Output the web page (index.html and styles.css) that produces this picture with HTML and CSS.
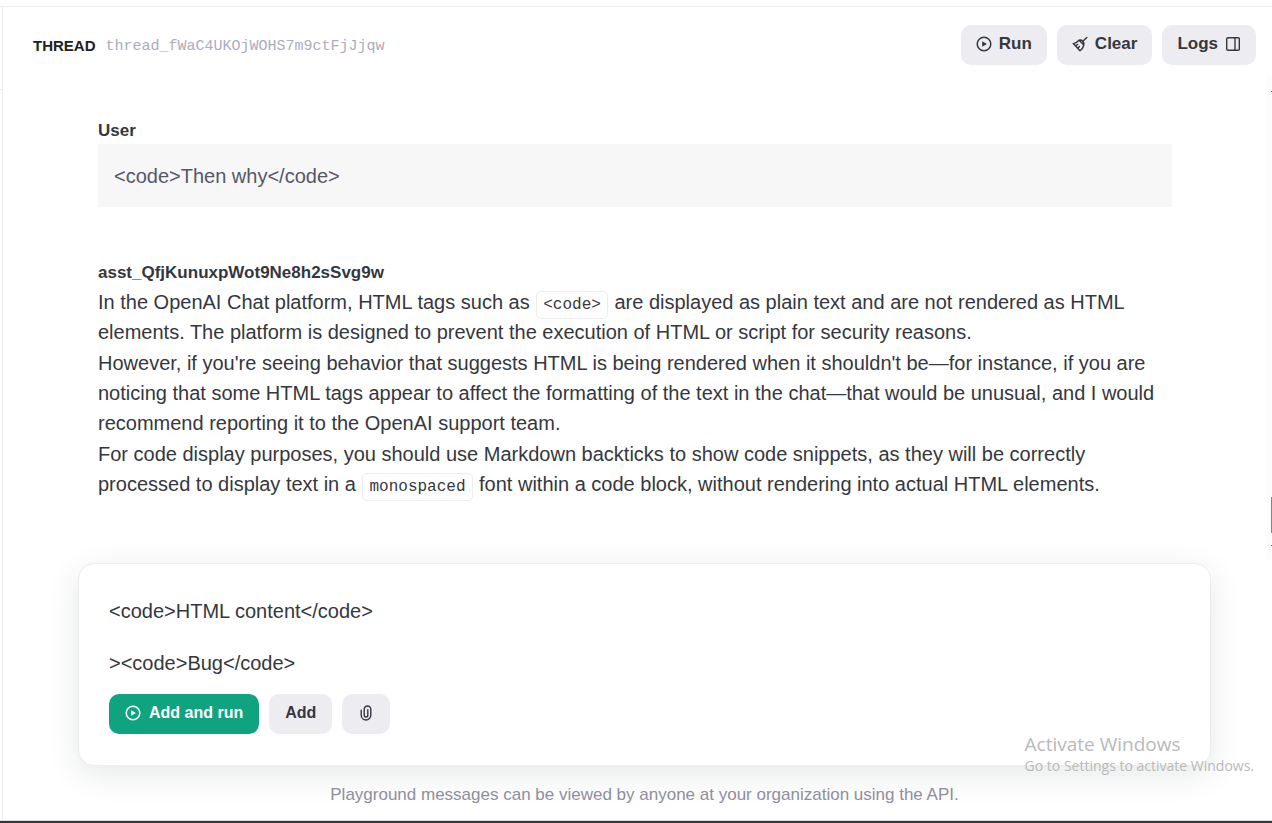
FILE: index.html
```html
<!DOCTYPE html>
<html lang="en">
<head>
<meta charset="utf-8">
<meta name="viewport" content="width=device-width, initial-scale=1">
<title>Playground</title>
<link rel="stylesheet" href="styles.css">
</head>
<body>
<div class="app">
  <aside class="rail"><div class="rail-head"></div></aside>
  <main class="main">
    <header class="header">
      <h1 class="title">THREAD</h1>
      <span class="thread-id">thread_fWaC4UKOjWOHS7m9ctFjJjqw</span>
      <div class="actions">
        <button class="btn" type="button">
          <svg class="icon" viewBox="0 0 16 16" fill="none" stroke="currentColor" stroke-width="1.5"><circle cx="8" cy="8" r="6.8"/><path d="M6.2 5.2v5.6L10.9 8z" fill="currentColor" stroke="none"/></svg>
          Run
        </button>
        <button class="btn" type="button">
          <svg class="icon" viewBox="0 0 16 16" fill="none" stroke="currentColor" stroke-width="1.4" stroke-linecap="round" stroke-linejoin="round"><path d="M14.8 1.4 10.6 5.6M7 4.2 11.8 9M7 4.2Q4.8 6.8 1.2 7.6L8 14.8Q11.2 12.2 11.8 9M7 4.2Q9.2 3.6 10.8 5.2T11.8 9M3.4 9.8 5.6 8.4M6 12.4 7.4 10.4"/></svg>
          Clear
        </button>
        <button class="btn" type="button">
          Logs
          <svg class="icon" viewBox="0 0 16 16" fill="none" stroke="currentColor" stroke-width="1.4"><rect x="1.7" y="1.7" width="12.6" height="12.6" rx="1.2"/><path d="M10 1.7v12.6"/></svg>
        </button>
      </div>
    </header>

    <div class="scroller">
      <section class="messages">
        <article class="message">
          <h2 class="author">User</h2>
          <p class="user-text">&lt;code&gt;Then why&lt;/code&gt;</p>
        </article>
        <article class="message">
          <h2 class="author">asst_QfjKunuxpWot9Ne8h2sSvg9w</h2>
          <p class="reply">In the OpenAI Chat platform, HTML tags such as <code class="code">&lt;code&gt;</code> are displayed as plain text and are not rendered as HTML<br>elements. The platform is designed to prevent the execution of HTML or script for security reasons.</p>
          <p class="reply">However, if you're seeing behavior that suggests HTML is being rendered when it shouldn't be—for instance, if you are<br>noticing that some HTML tags appear to affect the formatting of the text in the chat—that would be unusual, and I would<br>recommend reporting it to the OpenAI support team.</p>
          <p class="reply">For code display purposes, you should use Markdown backticks to show code snippets, as they will be correctly<br>processed to display text in a <code class="code">monospaced</code> font within a code block, without rendering into actual HTML elements.</p>
        </article>
      </section>
      <div class="scrollbar"><span class="mark"></span><span class="thumb"></span><span class="mark"></span></div>
    </div>

    <form class="composer">
      <textarea class="input" rows="3" aria-label="Message">&lt;code&gt;HTML content&lt;/code&gt;

&gt;&lt;code&gt;Bug&lt;/code&gt;</textarea>
      <div class="buttons">
        <button class="btn primary" type="button">
          <svg class="icon" viewBox="0 0 16 16" fill="none" stroke="currentColor" stroke-width="1.5"><circle cx="8" cy="8" r="6.8"/><path d="M6.2 5.2v5.6L10.9 8z" fill="currentColor" stroke="none"/></svg>
          Add and run
        </button>
        <button class="btn" type="button">Add</button>
        <button class="btn" type="button" aria-label="Attach file">
          <svg class="icon" viewBox="0 0 16 16" fill="none" stroke="currentColor" stroke-width="1.4" stroke-linecap="round"><path d="M3.2 5.2v5a4.8 4.8 0 0 0 9.6 0V4.3a3.3 3.3 0 0 0-6.6 0v5.9a1.8 1.8 0 0 0 3.6 0V4.8"/></svg>
        </button>
      </div>
    </form>
    <p class="note">Playground messages can be viewed by anyone at your organization using the API.</p>
  </main>
</div>
<div class="watermark">
  <p class="watermark-title">Activate Windows</p>
  <p class="watermark-text">Go to Settings to activate Windows.</p>
</div>
</body>
</html>
```
FILE: styles.css
```css
* { box-sizing: border-box; }
body {
  margin: 0;
  min-height: 100vh;
  display: flex;
  flex-direction: column;
  padding-top: 6px;
  background: #fff;
  border-bottom: 2px solid #353539;
  color: #353740;
  font-family: "Liberation Sans", Arial, sans-serif;
  overflow: hidden;
}
h1, h2, p { margin: 0; }
.app {
  flex: 1;
  display: flex;
  border-top: 1px solid #ececf1;
  border-bottom: 1px solid #dcdcde;
}
.rail { width: 3px; border-right: 1px solid #ececf1; }
.rail-head { height: 83px; border-bottom: 1px solid #ececf1; }
.main { flex: 1; display: flex; flex-direction: column; min-width: 0; }
.header {
  display: flex;
  align-items: center;
  padding: 18px 16px 10px 30px;
}
.title { padding-top: 2px; font-size: 15px; font-weight: 700; line-height: 24px; color: #202123; }
.thread-id {
  padding-top: 2px;
  margin-left: 10px;
  font-family: "Liberation Mono", monospace;
  font-size: 15px;
  color: #acacbe;
}
.actions { margin-left: auto; display: flex; gap: 10px; }
.btn {
  display: flex;
  align-items: center;
  gap: 8px;
  height: 40px;
  padding: 0 15px 2px;
  border: 0;
  border-radius: 10px;
  background: #ececf1;
  color: #353740;
  font: 700 17px/24px "Liberation Sans", Arial, sans-serif;
}
.actions .btn { gap: 7px; }
.buttons .btn { padding: 0 16px 2px; font-size: 16px; }
.primary { background: #10a37f; color: #fff; }
.icon { width: 16px; height: 16px; }
.scroller { flex: 1; display: flex; }
.messages {
  flex: 1;
  display: flex;
  flex-direction: column;
  gap: 52px;
  padding: 42px 95px 0;
}
.author { padding-top: 1px; font-size: 17px; line-height: 26px; }
.user-text {
  padding: 17px 16px 16px;
  background: #f7f7f8;
  color: #565869;
  font-size: 20px;
  line-height: 30px;
}
.reply { margin-top: 1px; font-size: 20px; line-height: 30px; white-space: nowrap; }
.code {
  margin: 0 1px;
  padding: 4px 6px;
  border: 1px solid #ececf1;
  border-radius: 5px;
  font-family: "Liberation Mono", monospace;
  font-size: 16px;
  line-height: 20px;
}
.scrollbar {
  width: 5px;
  height: 485px;
  display: flex;
  flex-direction: column;
  align-items: flex-end;
  padding: 16px 0 14px;
  background: #fcfcfc;
}
.mark { width: 1px; height: 1px; background: #606060; }
.thumb { width: 1px; height: 36px; margin: auto 0 12px; background: #858585; }
.composer {
  margin: 0 61px 0 75px;
  padding: 34px 30px 31px;
  border: 1px solid #ececf1;
  border-radius: 16px;
  background: #fff;
  box-shadow: 0 8px 32px rgba(20, 50, 40, 0.11);
}
.input {
  display: block;
  width: 100%;
  padding: 0;
  border: 0;
  outline: 0;
  resize: none;
  background: transparent;
  color: #353740;
  font: 20px/26px "Liberation Sans", Arial, sans-serif;
  overflow: hidden;
}
.buttons { display: flex; gap: 10px; margin-top: 18px; }
.note {
  padding: 17px 0 13px 14px;
  text-align: center;
  font-size: 17px;
  line-height: 24px;
  color: #8e8ea0;
}
.watermark {
  position: absolute;
  right: 18px;
  bottom: 47px;
  color: #b9b9b9;
  font-family: "Open Sans", sans-serif;
}
.watermark-title { font-size: 19px; line-height: 24px; }
.watermark-text { font-size: 14px; line-height: 20px; }
```
